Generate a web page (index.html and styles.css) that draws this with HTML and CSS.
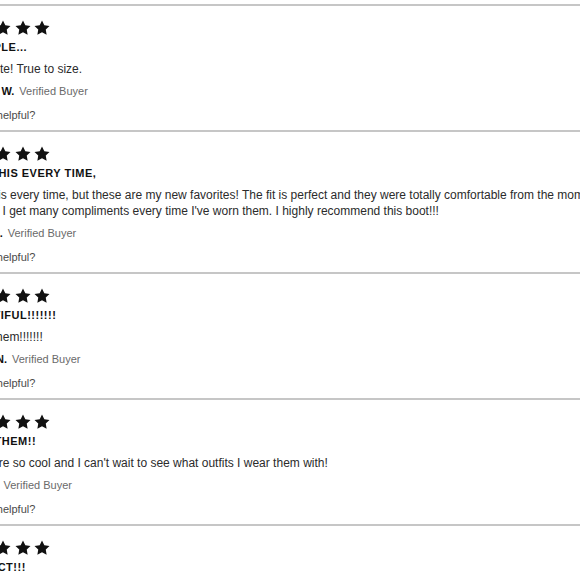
FILE: index.html
```html
<!DOCTYPE html>
<html lang="en">
<head>
<meta charset="utf-8">
<title>Reviews</title>
<link rel="stylesheet" href="styles.css">
</head>
<body>
<svg width="0" height="0" class="defs" aria-hidden="true">
  <symbol id="star" viewBox="0 0 24 24"><path d="M12 2l3.09 6.26L22 9.27l-5 4.87 1.18 6.88L12 17.77l-6.18 3.25L7 14.14 2 9.27l6.91-1.01L12 2z"/></symbol>
</svg>
<main class="reviews">
  <article class="review">
    <div class="stars"><svg><use href="#star"/></svg><svg><use href="#star"/></svg><svg><use href="#star"/></svg><svg><use href="#star"/></svg><svg><use href="#star"/></svg></div>
    <h3 class="title">SO SIMPLE...</h3>
    <p class="text">Super cute! True to size.</p>
    <div class="author"><span class="name">Michaela W.</span><span class="badge">Verified Buyer</span></div>
    <div class="helpful">Was this helpful?</div>
  </article>
  <article class="review">
    <div class="stars"><svg><use href="#star"/></svg><svg><use href="#star"/></svg><svg><use href="#star"/></svg><svg><use href="#star"/></svg><svg><use href="#star"/></svg></div>
    <h3 class="title">WEAR THIS EVERY TIME,</h3>
    <p class="text">I wear this every time, but these are my new favorites! The fit is perfect and they were totally comfortable from the moment I put them on, and<br>honestly, I get many compliments every time I've worn them. I highly recommend this boot!!!</p>
    <div class="author"><span class="name">Lauren K.</span><span class="badge">Verified Buyer</span></div>
    <div class="helpful">Was this helpful?</div>
  </article>
  <article class="review">
    <div class="stars"><svg><use href="#star"/></svg><svg><use href="#star"/></svg><svg><use href="#star"/></svg><svg><use href="#star"/></svg><svg><use href="#star"/></svg></div>
    <h3 class="title">¡¡BEAUTIFUL!!!!!!!</h3>
    <p class="text">I adore them!!!!!!!</p>
    <div class="author"><span class="name">Brianna N.</span><span class="badge">Verified Buyer</span></div>
    <div class="helpful">Was this helpful?</div>
  </article>
  <article class="review">
    <div class="stars"><svg><use href="#star"/></svg><svg><use href="#star"/></svg><svg><use href="#star"/></svg><svg><use href="#star"/></svg><svg><use href="#star"/></svg></div>
    <h3 class="title">I LOVE THEM!!</h3>
    <p class="text">Details are so cool and I can't wait to see what outfits I wear them with!</p>
    <div class="author"><span class="name">Hailey R.</span><span class="badge">Verified Buyer</span></div>
    <div class="helpful">Was this helpful?</div>
  </article>
  <article class="review">
    <div class="stars"><svg><use href="#star"/></svg><svg><use href="#star"/></svg><svg><use href="#star"/></svg><svg><use href="#star"/></svg><svg><use href="#star"/></svg></div>
    <h3 class="title">FIT EXACT!!!</h3>
    <p class="text">Perfect fit and so comfortable.</p>
    <div class="author"><span class="name">Kate P.</span><span class="badge">Verified Buyer</span></div>
    <div class="helpful">Was this helpful?</div>
  </article>
</main>
</body>
</html>
```
FILE: styles.css
```css
html, body {
  margin: 0;
  padding: 0;
  background: #ffffff;
  overflow: hidden;
}
body {
  font-family: "Liberation Sans", Arial, sans-serif;
  color: #2b2b2b;
}
.defs {
  position: absolute;
  width: 0;
  height: 0;
}
.reviews {
  margin: 4px 0 0 -48px;
  width: 900px;
}
.review {
  border-top: 2px solid #c6c6c6;
  padding: 13px 0 7px;
}
.stars {
  display: flex;
  gap: 1.5px;
  height: 18px;
  padding-left: 3px;
}
.stars svg {
  width: 18px;
  height: 18px;
  fill: #111111;
}
.title {
  margin: 3px 0 0;
  font-size: 11px;
  line-height: 14px;
  font-weight: 700;
  letter-spacing: 0.5px;
  color: #111111;
}
.text {
  margin: 7px 0 0;
  font-size: 12px;
  line-height: 16px;
  color: #2b2b2b;
}
.author {
  margin-top: 6px;
  display: flex;
  gap: 5px;
  font-size: 11px;
  line-height: 16px;
}
.name {
  font-weight: 700;
  color: #111111;
}
.badge {
  color: #6a6a6a;
}
.helpful {
  margin-top: 8px;
  font-size: 11px;
  line-height: 16px;
  color: #4a4a4a;
}
```
